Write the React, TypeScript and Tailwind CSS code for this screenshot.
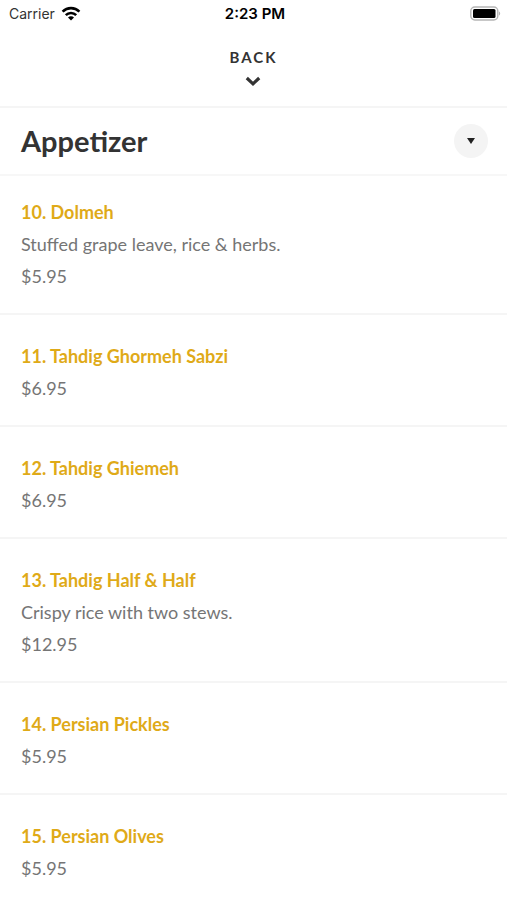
interface MenuItem {
  id: number;
  name: string;
  description?: string;
  price: string;
}

const menuItems: MenuItem[] = [
  { id: 10, name: 'Dolmeh', description: 'Stuffed grape leave, rice & herbs.', price: '$5.95' },
  { id: 11, name: 'Tahdig Ghormeh Sabzi', price: '$6.95' },
  { id: 12, name: 'Tahdig Ghiemeh', price: '$6.95' },
  { id: 13, name: 'Tahdig Half & Half', description: 'Crispy rice with two stews.', price: '$12.95' },
  { id: 14, name: 'Persian Pickles', price: '$5.95' },
  { id: 15, name: 'Persian Olives', price: '$5.95' },
];

function StatusBar() {
  return (
    <div className="grid grid-cols-3 items-center h-7 pl-[9px] pr-[6px] font-[Inter,sans-serif] text-sm text-black">
      <div className="flex items-center gap-1.5">
        <span className="text-[#333]">Carrier</span>
        <svg className="w-5 h-4" viewBox="0 0 20 16" fill="none" stroke="currentColor" strokeWidth="2.6" aria-hidden="true">
          <path d="M1.6 5.6a12 12 0 0 1 16.8 0" />
          <path d="M4.8 9.1a7.4 7.4 0 0 1 10.4 0" />
          <path d="M10 14.6l-3-3.1a4.2 4.2 0 0 1 6 0z" fill="currentColor" stroke="none" />
        </svg>
      </div>
      <span className="text-center text-[15px] font-semibold">2:23 PM</span>
      <svg className="w-8 h-4 justify-self-end" viewBox="0 0 32 16" aria-hidden="true">
        <rect x="1.8" y="1" width="27" height="13" rx="4" fill="#fff" stroke="#b5b5b5" strokeWidth="1.4" />
        <rect x="4" y="3" width="22.5" height="9" rx="1.5" fill="#000" />
        <path d="M30 5.5v4c1.6-.6 1.6-3.400 0-4z" fill="#b5b5b5" />
      </svg>
    </div>
  );
}

function MenuRow({ item }: { item: MenuItem }) {
  return (
    <li className="px-[21px] pt-[25px] pb-[21px] first:pt-5 border-b-2 border-[#f5f5f5] text-lg leading-8 text-[#757575]">
      <h2 className="font-bold text-[#dfaa18]">
        {item.id}. {item.name}
      </h2>
      {item.description && <p>{item.description}</p>}
      <p>{item.price}</p>
    </li>
  );
}

export default function App() {
  return (
    <div className="min-h-screen bg-white font-[Lato,sans-serif]">
      <StatusBar />
      <header className="flex justify-center pt-[19px] pb-[19px] border-b-2 border-[#f5f5f5]">
        <button className="flex flex-col items-center gap-2 text-[#333]">
          <span className="text-[15px] leading-5 font-bold tracking-[2px]">BACK</span>
          <svg className="w-4 h-3" viewBox="0 0 16 12" fill="none" stroke="currentColor" strokeWidth="3.2" aria-hidden="true">
            <path d="M1.800 3l6.200 5.800 6.200-5.800" />
          </svg>
        </button>
      </header>
      <main>
        <div className="flex items-center justify-between h-[68px] px-[21px] pr-[19px] border-b-2 border-[#f7f7f7]">
          <h1 className="text-[29px] leading-9 font-bold text-[#333]">Appetizer</h1>
          <button aria-label="Choose section" className="flex items-center justify-center w-[34px] h-[34px] rounded-full bg-[#f4f4f4]">
            <svg className="w-2 h-1.5" viewBox="0 0 8 6" aria-hidden="true">
              <path d="M0 0h8L4 6z" fill="#222" />
            </svg>
          </button>
        </div>
        <ul>
          {menuItems.map((item) => (
            <MenuRow key={item.id} item={item} />
          ))}
        </ul>
      </main>
    </div>
  );
}
